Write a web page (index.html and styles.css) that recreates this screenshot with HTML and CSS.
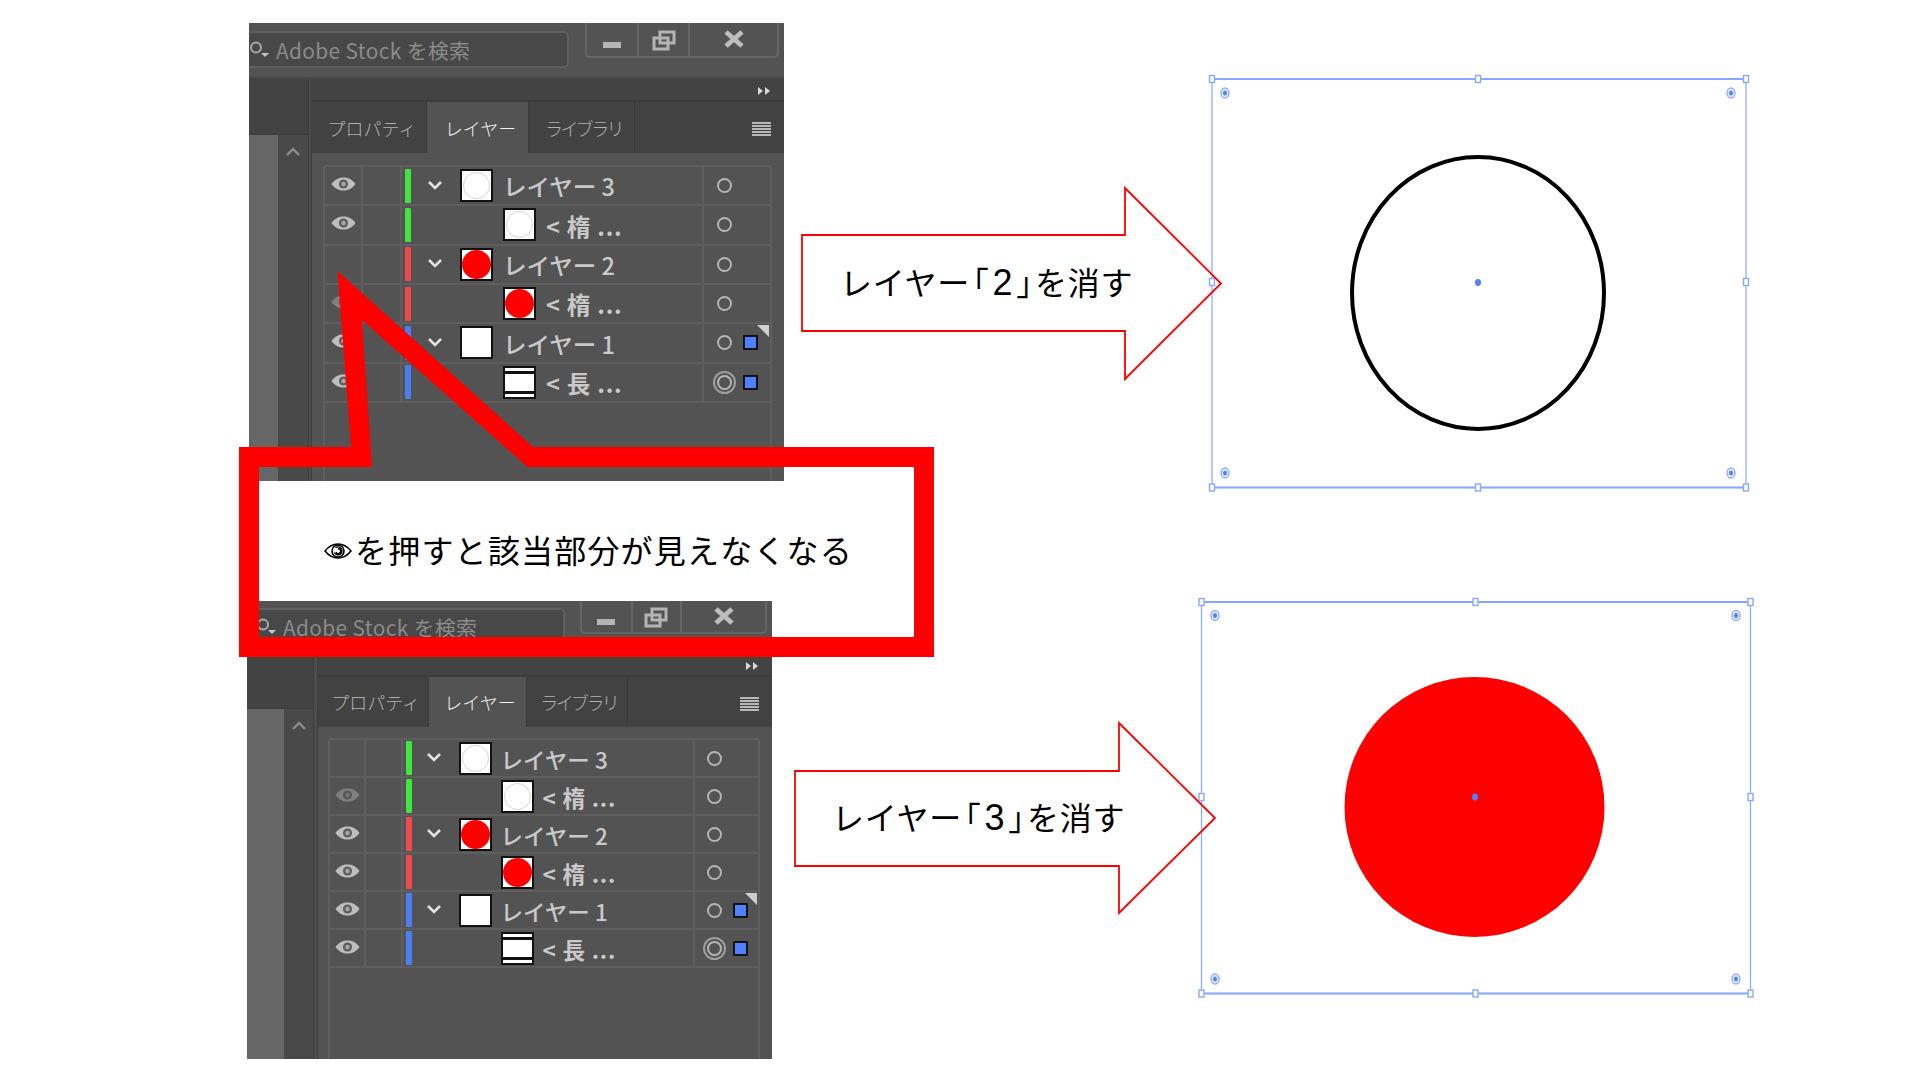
FILE: index.html
```html
<!DOCTYPE html>
<html lang="ja">
  <head>
    <meta charset="UTF-8">
    <title>レイヤーの表示と非表示</title>
    <link rel="stylesheet" href="styles.css">
  </head>
  <body>
    <svg class="defs" width="0" height="0">
      <symbol id="eye" viewBox="0 0 25 14">
        <path d="M0.5 7 C4 2.2 8 0.5 12.5 0.5 C17 0.5 21 2.2 24.5 7 C21 11.8 17 13.5 12.5 13.5 C8 13.5 4 11.8 0.5 7 Z" fill="#bdbdbd"/>
        <circle cx="12.5" cy="7" r="4.6" fill="#5f5f5f"/>
        <circle cx="12.5" cy="7" r="2.2" fill="#a8a8a8"/>
      </symbol>
      <symbol id="chevron" viewBox="0 0 16 10">
        <path d="M2 2 L8 8 L14 2" fill="none" stroke="#e2e2e2" stroke-width="2.6"/>
      </symbol>
      <symbol id="widget" viewBox="0 0 10 12">
        <ellipse cx="5" cy="6" rx="4" ry="5" fill="#e4ebff" stroke="#8fb0ff" stroke-width="1.4"/>
        <ellipse cx="5" cy="6" rx="2" ry="2.6" fill="#4f80ff"/>
      </symbol>
    </svg>

    <main class="slide">
      <section class="panel panel-a">
        <header class="titlebar">
          <div class="search">
            <svg class="search-icon" viewBox="0 0 22 18"><circle cx="7" cy="6.5" r="5" fill="none" stroke="#a9a9a9" stroke-width="2"/><path d="M12 12 L20 12 L16 16 Z" fill="#c4c4c4"/></svg>
            <span>Adobe Stock を検索</span>
          </div>
          <div class="winbtns">
            <div class="winbtn btn-min"><svg viewBox="0 0 24 22"><rect x="3" y="12" width="18" height="6" fill="#b4b4b4"/></svg></div>
            <div class="winbtn btn-max"><svg viewBox="0 0 24 22"><path d="M8 2 H22 V13 H16 V19 H2 V8 H8 Z M8 8 V13 H16 V8 Z" fill="none" stroke="#b4b4b4" stroke-width="3"/></svg></div>
            <div class="winbtn btn-close"><svg viewBox="0 0 24 22"><path d="M4 2 L20 16 M20 2 L4 16" stroke="#bebebe" stroke-width="4.8"/></svg></div>
          </div>
        </header>
        <div class="workspace">
          <aside class="dock">
            <div class="dock-top"></div>
            <div class="dock-main">
              <div class="dock-strip"></div>
              <div class="dock-scroll"><svg class="scroll-up" viewBox="0 0 16 10"><path d="M2 8 L8 2 L14 8" fill="none" stroke="#8c8c8c" stroke-width="2.4"/></svg></div>
            </div>
          </aside>
          <div class="sash"></div>
          <div class="side">
            <div class="band"><svg class="more" viewBox="0 0 14 10"><path d="M1 1 L6 5 L1 9 Z M8 1 L13 5 L8 9 Z" fill="#d8d8d8"/></svg></div>
            <nav class="tabs">
              <span class="tab tab-1">プロパティ</span>
              <span class="tab tab-2 is-active">レイヤー</span>
              <span class="tab tab-3">ライブラリ</span>
              <span class="menu"></span>
            </nav>
            <div class="layers">
              <div class="row">
                <div class="cell"><svg class="eye"><use href="#eye"/></svg></div>
                <div class="cell"></div>
                <div class="name"><i class="bar green"></i><span class="twist"><svg class="chevron"><use href="#chevron"/></svg></span><span class="thumb"><i class="ring"></i></span><span class="label">レイヤー 3</span></div>
                <div class="target"><i class="dot"></i></div>
              </div>
              <div class="row">
                <div class="cell"><svg class="eye"><use href="#eye"/></svg></div>
                <div class="cell"></div>
                <div class="name"><i class="bar green"></i><span class="indent"></span><span class="thumb"><i class="ring"></i></span><span class="label sub">&lt; 楕 ...</span></div>
                <div class="target"><i class="dot"></i></div>
              </div>
              <div class="row">
                <div class="cell"></div>
                <div class="cell"></div>
                <div class="name"><i class="bar red"></i><span class="twist"><svg class="chevron"><use href="#chevron"/></svg></span><span class="thumb"><i class="disc"></i></span><span class="label">レイヤー 2</span></div>
                <div class="target"><i class="dot"></i></div>
              </div>
              <div class="row">
                <div class="cell"><svg class="eye dim"><use href="#eye"/></svg></div>
                <div class="cell"></div>
                <div class="name"><i class="bar red"></i><span class="indent"></span><span class="thumb"><i class="disc"></i></span><span class="label sub">&lt; 楕 ...</span></div>
                <div class="target"><i class="dot"></i></div>
              </div>
              <div class="row has-corner">
                <div class="cell"><svg class="eye"><use href="#eye"/></svg></div>
                <div class="cell"></div>
                <div class="name"><i class="bar blue"></i><span class="twist"><svg class="chevron"><use href="#chevron"/></svg></span><span class="thumb"></span><span class="label">レイヤー 1</span></div>
                <div class="target"><i class="dot"></i><i class="sel"></i></div>
              </div>
              <div class="row">
                <div class="cell"><svg class="eye"><use href="#eye"/></svg></div>
                <div class="cell"></div>
                <div class="name"><i class="bar blue"></i><span class="indent"></span><span class="thumb"><i class="rect"></i></span><span class="label sub">&lt; 長 ...</span></div>
                <div class="target"><i class="dot double"></i><i class="sel"></i></div>
              </div>
            </div>
          </div>
        </div>
      </section>

      <section class="panel panel-b">
        <header class="titlebar">
          <div class="search">
            <svg class="search-icon" viewBox="0 0 22 18"><circle cx="7" cy="6.5" r="5" fill="none" stroke="#a9a9a9" stroke-width="2"/><path d="M12 12 L20 12 L16 16 Z" fill="#c4c4c4"/></svg>
            <span>Adobe Stock を検索</span>
          </div>
          <div class="winbtns">
            <div class="winbtn btn-min"><svg viewBox="0 0 24 22"><rect x="3" y="12" width="18" height="6" fill="#b4b4b4"/></svg></div>
            <div class="winbtn btn-max"><svg viewBox="0 0 24 22"><path d="M8 2 H22 V13 H16 V19 H2 V8 H8 Z M8 8 V13 H16 V8 Z" fill="none" stroke="#b4b4b4" stroke-width="3"/></svg></div>
            <div class="winbtn btn-close"><svg viewBox="0 0 24 22"><path d="M4 2 L20 16 M20 2 L4 16" stroke="#bebebe" stroke-width="4.8"/></svg></div>
          </div>
        </header>
        <div class="workspace">
          <aside class="dock">
            <div class="dock-top"></div>
            <div class="dock-main">
              <div class="dock-strip"></div>
              <div class="dock-scroll"><svg class="scroll-up" viewBox="0 0 16 10"><path d="M2 8 L8 2 L14 8" fill="none" stroke="#8c8c8c" stroke-width="2.4"/></svg></div>
            </div>
          </aside>
          <div class="sash"></div>
          <div class="side">
            <div class="band"><svg class="more" viewBox="0 0 14 10"><path d="M1 1 L6 5 L1 9 Z M8 1 L13 5 L8 9 Z" fill="#d8d8d8"/></svg></div>
            <nav class="tabs">
              <span class="tab tab-1">プロパティ</span>
              <span class="tab tab-2 is-active">レイヤー</span>
              <span class="tab tab-3">ライブラリ</span>
              <span class="menu"></span>
            </nav>
            <div class="layers">
              <div class="row">
                <div class="cell"></div>
                <div class="cell"></div>
                <div class="name"><i class="bar green"></i><span class="twist"><svg class="chevron"><use href="#chevron"/></svg></span><span class="thumb"><i class="ring"></i></span><span class="label">レイヤー 3</span></div>
                <div class="target"><i class="dot"></i></div>
              </div>
              <div class="row">
                <div class="cell"><svg class="eye dim"><use href="#eye"/></svg></div>
                <div class="cell"></div>
                <div class="name"><i class="bar green"></i><span class="indent"></span><span class="thumb"><i class="ring"></i></span><span class="label sub">&lt; 楕 ...</span></div>
                <div class="target"><i class="dot"></i></div>
              </div>
              <div class="row">
                <div class="cell"><svg class="eye"><use href="#eye"/></svg></div>
                <div class="cell"></div>
                <div class="name"><i class="bar red"></i><span class="twist"><svg class="chevron"><use href="#chevron"/></svg></span><span class="thumb"><i class="disc"></i></span><span class="label">レイヤー 2</span></div>
                <div class="target"><i class="dot"></i></div>
              </div>
              <div class="row">
                <div class="cell"><svg class="eye"><use href="#eye"/></svg></div>
                <div class="cell"></div>
                <div class="name"><i class="bar red"></i><span class="indent"></span><span class="thumb"><i class="disc"></i></span><span class="label sub">&lt; 楕 ...</span></div>
                <div class="target"><i class="dot"></i></div>
              </div>
              <div class="row has-corner">
                <div class="cell"><svg class="eye"><use href="#eye"/></svg></div>
                <div class="cell"></div>
                <div class="name"><i class="bar blue"></i><span class="twist"><svg class="chevron"><use href="#chevron"/></svg></span><span class="thumb"></span><span class="label">レイヤー 1</span></div>
                <div class="target"><i class="dot"></i><i class="sel"></i></div>
              </div>
              <div class="row">
                <div class="cell"><svg class="eye"><use href="#eye"/></svg></div>
                <div class="cell"></div>
                <div class="name"><i class="bar blue"></i><span class="indent"></span><span class="thumb"><i class="rect"></i></span><span class="label sub">&lt; 長 ...</span></div>
                <div class="target"><i class="dot double"></i><i class="sel"></i></div>
              </div>
            </div>
          </div>
        </div>
      </section>

      <svg class="drawing" viewBox="0 0 1920 1080">
        <g class="frame">
          <rect x="1212" y="79" width="534" height="408.5"/>
          <path class="edge" d="M1212 79 H1746 M1212 487.5 H1746"/>
          <rect class="h" x="1209.5" y="75.5" width="5" height="7"/>
          <rect class="h" x="1475.5" y="75.5" width="5" height="7"/>
          <rect class="h" x="1743.5" y="75.5" width="5" height="7"/>
          <rect class="h" x="1209.5" y="278.5" width="5" height="7"/>
          <rect class="h" x="1743.5" y="278.5" width="5" height="7"/>
          <rect class="h" x="1209.5" y="484" width="5" height="7"/>
          <rect class="h" x="1475.5" y="484" width="5" height="7"/>
          <rect class="h" x="1743.5" y="484" width="5" height="7"/>
          <use href="#widget" x="1220" y="87" width="10" height="12"/>
          <use href="#widget" x="1726" y="87" width="10" height="12"/>
          <use href="#widget" x="1220" y="467" width="10" height="12"/>
          <use href="#widget" x="1726" y="467" width="10" height="12"/>
        </g>
        <ellipse class="outline" cx="1478" cy="293" rx="126" ry="136"/>
        <ellipse class="center" cx="1478" cy="282.5" rx="3" ry="3.4"/>

        <g class="frame">
          <rect x="1201.5" y="602" width="549" height="391.5"/>
          <path class="edge" d="M1201.5 602 H1750.5 M1201.5 993.5 H1750.5"/>
          <rect class="h" x="1199" y="598.5" width="5" height="7"/>
          <rect class="h" x="1473" y="598.5" width="5" height="7"/>
          <rect class="h" x="1748" y="598.5" width="5" height="7"/>
          <rect class="h" x="1199" y="793.5" width="5" height="7"/>
          <rect class="h" x="1748" y="793.5" width="5" height="7"/>
          <rect class="h" x="1199" y="990" width="5" height="7"/>
          <rect class="h" x="1473" y="990" width="5" height="7"/>
          <rect class="h" x="1748" y="990" width="5" height="7"/>
          <use href="#widget" x="1210" y="609.5" width="10" height="12"/>
          <use href="#widget" x="1731" y="609.5" width="10" height="12"/>
          <use href="#widget" x="1210" y="973" width="10" height="12"/>
          <use href="#widget" x="1731" y="973" width="10" height="12"/>
        </g>
        <ellipse class="filled" cx="1474.5" cy="807" rx="130" ry="130"/>
        <ellipse class="center" cx="1475" cy="797" rx="3" ry="3.4"/>

        <path class="arrow" d="M802 235 H1125 V188 L1221 283.5 L1125 379 V331 H802 Z"/>
        <path class="arrow" d="M795 771 H1119 V723 L1215 818 L1119 913 V866 H795 Z"/>
        <path class="callout" fill-rule="evenodd" d="M239 447 H351 L337.5 271 L533 447 H934 V657 H239 Z M259 467 V637 H914 V467 H527.5 L362 320 L372 467 Z"/>
      </svg>

      <p class="note note-callout">
        <svg class="note-eye" viewBox="0 0 28 16"><path d="M1 8 C5 3 9 1 14 1 C19 1 23 3 27 8 C23 13 19 15 14 15 C9 15 5 13 1 8 Z" fill="none" stroke="#000" stroke-width="1.6"/><circle cx="14" cy="8" r="6" fill="none" stroke="#000" stroke-width="1.6"/><path d="M11.5 4.8 A4 4 0 1 1 10.4 9.5 M14 5.8 A2.4 2.4 0 1 1 12 9" fill="none" stroke="#000" stroke-width="1.3"/></svg>
        <span>を押すと該当部分が見えなくなる</span>
      </p>
      <p class="note note-arrow note-arrow-1">レイヤー<span class="open">「</span><span class="num">2</span><span class="close">」</span>を消す</p>
      <p class="note note-arrow note-arrow-2">レイヤー<span class="open">「</span><span class="num">3</span><span class="close">」</span>を消す</p>
    </main>
  </body>
</html>
```

FILE: styles.css
```css
html, body {
  margin: 0;
  padding: 0;
  background: #fff;
}
.defs {
  position: absolute;
}
.slide {
  position: relative;
  width: 1920px;
  height: 1080px;
  overflow: hidden;
  background: #fff;
  font-family: "Noto Sans CJK JP", "Noto Sans", sans-serif;
}

/* panels */
.panel {
  position: absolute;
  height: 458px;
  display: flex;
  flex-direction: column;
  overflow: hidden;
  background: #535353;
}
.panel-a {
  left: 249px;
  top: 23px;
  width: 535px;
  --title-h: 56px;
  --search-top: 8px;
  --search-w: 320px;
  --search-gap: 16px;
  --search-pad: 0px;
  --btn-1: 52px;
  --btn-2: 51px;
  --btn-3: 87px;
  --btn-h: 35px;
  --dock-w: 59px;
  --dock-top: 56px;
  --strip-w: 29px;
  --sash-w: 4px;
  --tab-1: 115px;
  --tab-2: 102px;
  --tab-3: 106px;
  --tabs-h: 51px;
  --table-top: 12px;
  --table-l: 11px;
  --row-h: 39.33px;
  --col-eye: 38px;
  --col-lock: 39px;
  --col-target: 68px;
  --target-pad: 12.5px;
  --bar-l: 3px;
  --twist: 49px;
  --indent: 92px;
  --label-gap: 10px;
  --label-size: 23.5px;
}
.panel-b {
  left: 247px;
  top: 601px;
  width: 525px;
  --title-h: 53px;
  --search-top: 7px;
  --search-w: 318px;
  --search-gap: 15px;
  --search-pad: 9px;
  --btn-1: 50.5px;
  --btn-2: 49.5px;
  --btn-3: 83px;
  --btn-h: 33px;
  --dock-w: 66px;
  --dock-top: 55px;
  --strip-w: 37px;
  --sash-w: 5px;
  --tab-1: 110.5px;
  --tab-2: 98px;
  --tab-3: 101.5px;
  --tabs-h: 50px;
  --table-top: 11px;
  --table-l: 10px;
  --row-h: 38px;
  --col-eye: 36px;
  --col-lock: 36.5px;
  --col-target: 65px;
  --target-pad: 11.5px;
  --bar-l: 3.5px;
  --twist: 46.5px;
  --indent: 88.5px;
  --label-gap: 9px;
  --label-size: 22.5px;
}

.titlebar {
  height: var(--title-h);
  flex: none;
  display: flex;
  align-items: flex-start;
  box-sizing: border-box;
  border-bottom: 2px solid #474747;
}
.search {
  display: flex;
  align-items: center;
  gap: 5px;
  box-sizing: border-box;
  width: var(--search-w);
  flex: none;
  height: 37px;
  margin-top: var(--search-top);
  padding-left: var(--search-pad);
  border: 2px solid #5f5f5f;
  border-left: 0;
  border-radius: 0 5px 5px 0;
  background: #484848;
  color: #8b8b8b;
  font-size: 20.8px;
  letter-spacing: 0.4px;
  white-space: nowrap;
}
.search-icon {
  width: 22px;
  height: 18px;
  flex: none;
}
.winbtns {
  display: flex;
  margin-left: var(--search-gap);
  height: var(--btn-h);
  box-sizing: border-box;
  border: 2px solid #666;
  border-top: 0;
  border-radius: 0 0 5px 5px;
}
.winbtn {
  display: flex;
  align-items: center;
  justify-content: center;
  box-sizing: border-box;
  padding-top: 3px;
  border-right: 2px solid #666;
}
.winbtn svg {
  width: 24px;
  height: 22px;
}
.btn-min { width: var(--btn-1); }
.btn-max { width: var(--btn-2); }
.btn-close { width: var(--btn-3); border-right: 0; }

.workspace {
  flex: 1;
  display: flex;
  min-height: 0;
}
.dock {
  width: var(--dock-w);
  flex: none;
  display: flex;
  flex-direction: column;
}
.dock-top {
  height: var(--dock-top);
  background: #434343;
  border-bottom: 1px solid #3c3c3c;
  box-sizing: border-box;
}
.dock-main {
  flex: 1;
  display: flex;
}
.dock-strip {
  width: var(--strip-w);
  background: #666;
}
.dock-scroll {
  flex: 1;
  display: flex;
  justify-content: center;
  padding-top: 12px;
  background: #494949;
}
.scroll-up {
  width: 16px;
  height: 10px;
}
.sash {
  width: var(--sash-w);
  flex: none;
  box-sizing: border-box;
  background: #4d4d4d;
  border-left: 1.5px solid #3b3b3b;
  border-right: 1.5px solid #3f3f3f;
}
.side {
  flex: 1;
  min-width: 0;
  display: flex;
  flex-direction: column;
}
.band {
  height: 23px;
  flex: none;
  box-sizing: border-box;
  display: flex;
  justify-content: flex-end;
  align-items: center;
  padding: 3px 13px 0 0;
  background: #434343;
  border-bottom: 2px solid #3b3b3b;
}
.more {
  width: 14px;
  height: 10px;
}
.tabs {
  height: var(--tabs-h);
  flex: none;
  display: flex;
  background: #424242;
  position: relative;
}
.tab {
  box-sizing: border-box;
  display: flex;
  align-items: center;
  justify-content: center;
  padding-left: 6px;
  color: #b0b0b0;
  font-size: 18px;
  font-weight: 300;
  white-space: nowrap;
  border-right: 1px solid #383838;
}
.tab-1 { width: var(--tab-1); }
.tab-2 { width: var(--tab-2); }
.tab-3 { width: var(--tab-3); letter-spacing: -2.6px; padding-left: 4px; }
.tab.is-active {
  background: #535353;
  color: #f0f0f0;
  border-right: 1px solid #3b3b3b;
}
.menu {
  position: absolute;
  right: 13px;
  top: 20px;
  width: 19px;
  height: 14px;
  background: repeating-linear-gradient(#b8b8b8 0 2px, transparent 2px 3px);
}
.layers {
  flex: 1;
  margin: var(--table-top) 12px 0 var(--table-l);
  border: 2px solid #5e5e5e;
  border-bottom: 0;
  border-radius: 4px 4px 0 0;
}
.row {
  position: relative;
  display: grid;
  grid-template-columns: var(--col-eye) var(--col-lock) 1fr var(--col-target);
  height: var(--row-h);
  box-sizing: border-box;
  border-bottom: 2px solid #5e5e5e;
}
.cell {
  display: flex;
  align-items: center;
  justify-content: center;
  border-right: 2px solid #5e5e5e;
}
.eye {
  width: 25px;
  height: 14px;
  margin-top: -3px;
}
.eye.dim {
  opacity: 0.42;
}
.name {
  display: flex;
  align-items: center;
  min-width: 0;
  padding-left: var(--bar-l);
  color: #c9c9c9;
}
.bar {
  width: 6px;
  height: 34px;
  flex: none;
  border-radius: 1px;
}
.green { background: #3ee63e; }
.red { background: #f04a4a; }
.blue { background: #4d7ef0; }
.twist {
  width: var(--twist);
  flex: none;
  display: flex;
  justify-content: center;
}
.chevron {
  width: 16px;
  height: 10px;
  margin: -2px 2px 0 0;
}
.indent {
  width: var(--indent);
  flex: none;
}
.thumb {
  width: 33px;
  height: 33px;
  flex: none;
  box-sizing: border-box;
  display: flex;
  border: 2px solid #111;
  background: #fff;
}
.ring, .disc {
  flex: 1;
  margin: 1px;
  border-radius: 50%;
}
.ring {
  border: 1px solid #d4d4d4;
}
.disc {
  margin: 0;
  background: #f00;
}
.rect {
  flex: 1;
  margin: 3px 0;
  border-top: 3px solid #111;
  border-bottom: 3px solid #111;
}
.label {
  margin-left: var(--label-gap);
  margin-top: 3px;
  font-size: var(--label-size);
  font-weight: 500;
  line-height: 1;
  white-space: nowrap;
}
.label.sub {
  letter-spacing: 0.8px;
  font-weight: 700;
}
.target {
  display: flex;
  align-items: center;
  gap: 11.5px;
  padding-left: var(--target-pad);
  border-left: 2px solid #5e5e5e;
}
.dot {
  width: 15px;
  height: 15px;
  flex: none;
  box-sizing: border-box;
  border: 2px solid #b4b4b4;
  border-radius: 50%;
}
.dot.double {
  box-shadow: 0 0 0 2px #535353, 0 0 0 4px #9e9e9e;
}
.sel {
  width: 15px;
  height: 15px;
  flex: none;
  box-sizing: border-box;
  border: 2px solid #111;
  border-radius: 1px;
  background: #4f80ff;
}
.has-corner::after {
  content: "";
  position: absolute;
  right: 1px;
  top: 1px;
  border-top: 12px solid #cfcfcf;
  border-left: 12px solid transparent;
}

/* drawing on top of the slide */
.drawing {
  position: absolute;
  left: 0;
  top: 0;
  width: 1920px;
  height: 1080px;
}
.frame rect {
  fill: none;
  stroke: #86a8ff;
  stroke-width: 1.2;
}
.frame .edge {
  fill: none;
  stroke: #86a8ff;
  stroke-width: 2;
}
.frame rect.h {
  fill: #fff;
  stroke-width: 1.4;
}
.outline {
  fill: none;
  stroke: #000;
  stroke-width: 4;
}
.filled {
  fill: #f00;
}
.center {
  fill: #4f80ff;
}
.arrow {
  fill: none;
  stroke: #f00;
  stroke-width: 1.8;
}
.callout {
  fill: #f00;
}

.note {
  position: absolute;
  margin: 0;
  color: #000;
  white-space: nowrap;
  line-height: 1;
}
.note-callout {
  left: 324px;
  top: 533px;
  display: flex;
  align-items: center;
  gap: 3px;
  font-size: 32px;
  letter-spacing: 1.2px;
}
.note-eye {
  width: 28px;
  height: 16px;
  margin-top: 4px;
}
.note-arrow {
  font-size: 32px;
  letter-spacing: 0.7px;
}
.note-arrow .open,
.note-arrow .close {
  font-feature-settings: "halt";
}
.note-arrow .open {
  margin-left: 3px;
}
.note-arrow .close {
  margin-right: 2px;
}
.note-arrow .num {
  margin: 0 3px;
  font-family: "Liberation Sans", sans-serif;
  font-size: 36px;
}
.note-arrow-1 {
  left: 840px;
  top: 265px;
}
.note-arrow-2 {
  left: 832px;
  top: 800px;
}
```
